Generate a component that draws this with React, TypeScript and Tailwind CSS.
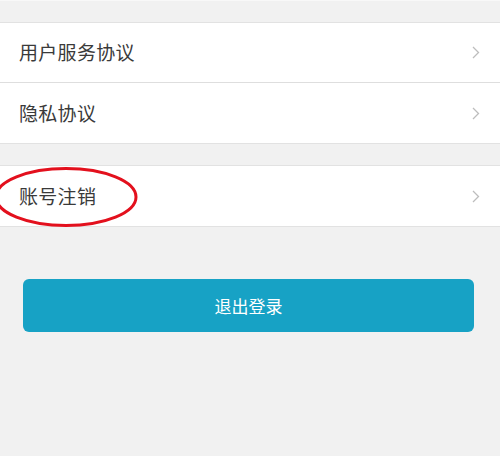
import React from "react";

const font = { fontFamily: '"Noto Sans CJK SC", "Noto Sans", sans-serif' };

function Chevron() {
  return (
    <svg width="8" height="13" viewBox="0 0 8 13" className="mr-[20px]">
      <polyline points="1,1 6.5,6.5 1,12" fill="none" stroke="#bdbdbd" strokeWidth="1.3" />
    </svg>
  );
}

function Row({ label, border }: { label: string; border?: boolean }) {
  return (
    <div className={`flex h-[60px] items-center justify-between bg-white pl-[19px] ${border ? "border-b border-[#dedede]" : ""}`}>
      <span className="text-[19px] tracking-[0.3px] text-[#3a3a3a]">{label}</span>
      <Chevron />
    </div>
  );
}

export default function App() {
  return (
    <div className="relative h-[456px] w-[500px] overflow-hidden bg-[#f1f1f1]" style={font}>
      <div className="h-[22px] border-t border-[#f8f8f8]" />
      <div className="border-y border-[#e2e2e2]">
        <Row label="用户服务协议" border />
        <Row label="隐私协议" />
      </div>
      <div className="h-[21px]" />
      <div className="border-y border-[#e2e2e2]">
        <Row label="账号注销" />
      </div>
      <div className="pl-[23px] pr-[26px] pt-[52px]">
        <button className="flex h-[53px] w-full items-center justify-center rounded-[6px] bg-[#17a2c5] text-[17px] text-white">
          退出登录
        </button>
      </div>
      <svg className="absolute left-0 top-0" width="500" height="456" viewBox="0 0 500 456">
        <ellipse cx="66" cy="197" rx="70" ry="28.5" fill="none" stroke="#e3101d" strokeWidth="3" />
      </svg>
    </div>
  );
}
